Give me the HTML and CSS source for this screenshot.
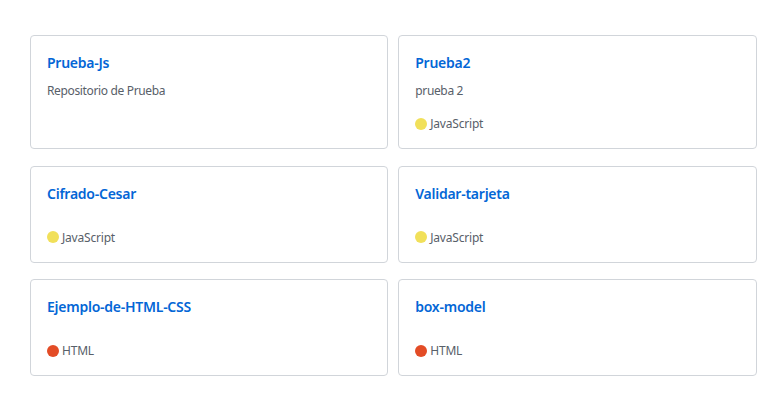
FILE: index.html
```html
<!DOCTYPE html>
<html lang="es">
<head>
<meta charset="utf-8">
<title>Repositorios</title>
<link rel="stylesheet" href="styles.css">
</head>
<body>
<ol class="pinned">
  <li class="card">
    <a class="repo" href="#">Prueba-Js</a>
    <p class="desc">Repositorio de Prueba</p>
  </li>
  <li class="card">
    <a class="repo" href="#">Prueba2</a>
    <p class="desc">prueba 2</p>
    <p class="lang"><span class="dot js"></span>JavaScript</p>
  </li>
  <li class="card">
    <a class="repo" href="#">Cifrado-Cesar</a>
    <p class="desc"></p>
    <p class="lang"><span class="dot js"></span>JavaScript</p>
  </li>
  <li class="card">
    <a class="repo" href="#">Validar-tarjeta</a>
    <p class="desc"></p>
    <p class="lang"><span class="dot js"></span>JavaScript</p>
  </li>
  <li class="card">
    <a class="repo" href="#">Ejemplo-de-HTML-CSS</a>
    <p class="desc"></p>
    <p class="lang"><span class="dot html"></span>HTML</p>
  </li>
  <li class="card">
    <a class="repo" href="#">box-model</a>
    <p class="desc"></p>
    <p class="lang"><span class="dot html"></span>HTML</p>
  </li>
</ol>
</body>
</html>
```

FILE: styles.css
```css
html, body {
  margin: 0;
  background: #ffffff;
}
body {
  font-family: "Noto Sans", "Open Sans", sans-serif;
  color: #586069;
  padding: 35px 23.5px 0 30px;
}
.pinned {
  list-style: none;
  margin: 0;
  padding: 0;
  display: grid;
  grid-template-columns: 1fr 1fr;
  column-gap: 10px;
  row-gap: 16.5px;
}
.card {
  border: 1px solid #d1d5da;
  border-radius: 4px;
  padding: 16px;
  display: flex;
  flex-direction: column;
}
.repo {
  font-size: 14px;
  line-height: 21px;
  font-weight: 600;
  letter-spacing: -0.25px;
  color: #0366d6;
  text-decoration: none;
}
.desc {
  margin: 9px 0 15px;
  font-size: 12px;
  line-height: 18px;
  letter-spacing: -0.35px;
  min-height: 1px;
}
.lang {
  margin: 0;
  font-size: 12px;
  line-height: 17px;
  letter-spacing: -0.2px;
  display: flex;
  align-items: center;
}
.dot {
  width: 12px;
  height: 12px;
  border-radius: 50%;
  margin-right: 3px;
}
.dot.js { background: #f1e05a; }
.dot.html { background: #e34c26; }
```
